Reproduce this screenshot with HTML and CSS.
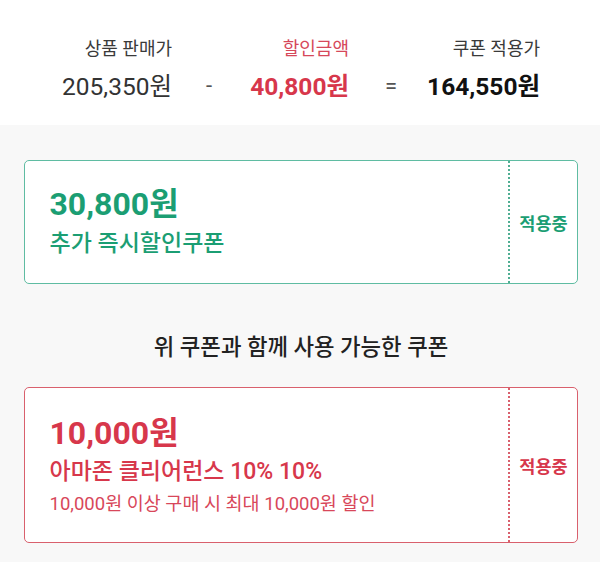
FILE: index.html
```html
<!DOCTYPE html>
<html lang="ko">
<head>
<meta charset="utf-8">
<link rel="stylesheet" href="styles.css">
</head>
<body>
<section class="summary">
  <div class="label">상품 판매가</div>
  <div></div>
  <div class="label label-red">할인금액</div>
  <div></div>
  <div class="label">쿠폰 적용가</div>
  <div class="value">205,350원</div>
  <div class="op">-</div>
  <div class="value value-red">40,800원</div>
  <div class="op">=</div>
  <div class="value value-total">164,550원</div>
</section>
<main class="content">
  <div class="coupon coupon-green">
    <div class="coupon-main">
      <div class="amount">30,800원</div>
      <div class="name">추가 즉시할인쿠폰</div>
    </div>
    <div class="coupon-stub">적용중</div>
  </div>
  <h2 class="heading">위 쿠폰과 함께 사용 가능한 쿠폰</h2>
  <div class="coupon coupon-red">
    <div class="coupon-main">
      <div class="amount">10,000원</div>
      <div class="name">아마존 클리어런스 10% 10%</div>
      <div class="desc">10,000원 이상 구매 시 최대 10,000원 할인</div>
    </div>
    <div class="coupon-stub">적용중</div>
  </div>
</main>
</body>
</html>
```
FILE: styles.css
```css
* { box-sizing: border-box; }
html, body { margin: 0; padding: 0; }
body {
  width: 600px;
  height: 562px;
  overflow: hidden;
  background: #f8f8f8;
  font-family: Roboto, "Noto Sans CJK KR", sans-serif;
  color: #222;
}
.summary {
  background: #fff;
  height: 125px;
  padding-top: 38px;
  display: grid;
  grid-template-columns: 172px 74px 103px 84px 107px;
  grid-template-rows: 22px 30px;
  row-gap: 12px;
}
.label {
  justify-self: end;
  text-align: right;
  font-size: 18px;
  line-height: 22px;
  color: #3a3a3a;
  white-space: nowrap;
}
.label-red { color: #d6485a; }
.value {
  justify-self: end;
  text-align: right;
  font-size: 24.5px;
  line-height: 30px;
  color: #333;
  white-space: nowrap;
}
.value-red { color: #d7374b; font-weight: 700; }
.value-total { color: #111; font-weight: 700; }
.op {
  text-align: center;
  font-size: 22px;
  line-height: 28px;
  color: #555;
}
.content {
  padding: 35px 22px 0 24px;
}
.coupon {
  display: flex;
  background: #fff;
  border: 1.5px solid;
  border-radius: 5px;
  width: 554px;
}
.coupon-green { border-color: #5fbca2; color: #1b9e73; height: 124px; }
.coupon-red { border-color: #d9606d; color: #d7374b; height: 156px; }
.coupon-main {
  flex: 1;
  display: flex;
  flex-direction: column;
  justify-content: center;
  padding-left: 24.5px;
}
.amount {
  font-size: 32px;
  font-weight: 700;
  line-height: 38px;
}
.name {
  font-size: 23px;
  font-weight: 500;
  line-height: 30px;
  margin-top: 6px;
}
.coupon-red .name { margin-top: 5px; }
.desc {
  font-size: 18.5px;
  line-height: 26px;
  margin-top: 4px;
  color: #d8475a;
}
.coupon-stub {
  width: 69px;
  border-left: 2px dotted currentColor;
  display: flex;
  align-items: center;
  justify-content: center;
  font-size: 17.5px;
  font-weight: 700;
}
.coupon-green .coupon-stub { border-left-color: #4fae92; }
.coupon-red .coupon-stub { border-left-color: #d9606d; }
.heading {
  margin: 48px 0 25px;
  text-align: center;
  font-size: 22.3px;
  line-height: 30px;
  font-weight: 500;
  color: #222;
}
```
